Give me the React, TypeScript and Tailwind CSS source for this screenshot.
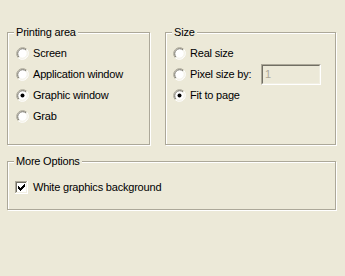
import React from "react";

function Radio({ checked }: { checked?: boolean }) {
  return (
    <svg width="13" height="13" viewBox="0 0 13 13" className="shrink-0">
      <circle cx="6.5" cy="6.5" r="5.5" fill="#ffffff" />
      <path d="M2.26 10.74 A6 6 0 0 1 10.74 2.26" fill="none" stroke="#aca899" strokeWidth="1" />
      <path d="M10.74 2.26 A6 6 0 0 1 2.26 10.74" fill="none" stroke="#ffffff" strokeWidth="1" />
      <path d="M2.97 10.03 A5 5 0 0 1 10.03 2.97" fill="none" stroke="#716f64" strokeWidth="1" />
      <path d="M10.03 2.97 A5 5 0 0 1 2.97 10.03" fill="none" stroke="#f1efe2" strokeWidth="1" />
      {checked && <circle cx="6.5" cy="6.5" r="2" fill="#000000" />}
    </svg>
  );
}

function Checkbox({ checked }: { checked?: boolean }) {
  const cols = [3, 4, 5, 6, 7, 8, 9];
  const tops = [5, 6, 7, 6, 5, 4, 3];
  return (
    <svg width="13" height="13" viewBox="0 0 13 13" className="shrink-0" shapeRendering="crispEdges">
      <rect x="0" y="0" width="13" height="13" fill="#ffffff" />
      <rect x="0" y="0" width="12" height="1" fill="#aca899" />
      <rect x="0" y="0" width="1" height="12" fill="#aca899" />
      <rect x="1" y="1" width="10" height="1" fill="#716f64" />
      <rect x="1" y="1" width="1" height="10" fill="#716f64" />
      <rect x="1" y="11" width="11" height="1" fill="#f1efe2" />
      <rect x="11" y="1" width="1" height="11" fill="#f1efe2" />
      {checked &&
        cols.map((c, i) => (
          <rect key={c} x={c} y={tops[i]} width="1" height="3" fill="#000000" />
        ))}
    </svg>
  );
}

function Group({
  title,
  className,
  children,
}: {
  title: string;
  className: string;
  children: React.ReactNode;
}) {
  return (
    <div
      className={
        "relative border border-[#aca899] shadow-[inset_1px_1px_0_#ffffff,1px_1px_0_#ffffff] " +
        className
      }
    >
      <div className="absolute left-[6px] top-[-7px] bg-[#ece9d8] px-[2px] leading-[13px]">
        {title}
      </div>
      {children}
    </div>
  );
}

function RadioRow({ label, checked }: { label: string; checked?: boolean }) {
  return (
    <div className="flex h-[21px] items-center gap-[4px]">
      <Radio checked={checked} />
      <span className="leading-[13px]">{label}</span>
    </div>
  );
}

export default function App() {
  return (
    <div
      className="w-[345px] h-[276px] bg-[#ece9d8] pt-[32px] pl-[7px] text-[11px] tracking-[-0.2px] text-black"
      style={{ fontFamily: '"Liberation Sans", Arial, sans-serif' }}
    >
      <div className="flex gap-[15px]">
        <Group title="Printing area" className="w-[143px] h-[113px] pt-[10px] pl-[8px]">
          <RadioRow label="Screen" />
          <RadioRow label="Application window" />
          <RadioRow label="Graphic window" checked />
          <RadioRow label="Grab" />
        </Group>
        <Group title="Size" className="w-[171px] h-[113px] pt-[10px] pl-[7px]">
          <RadioRow label="Real size" />
          <div className="flex h-[21px] items-center">
            <div className="flex flex-1 items-center gap-[4px]">
              <Radio />
              <span className="leading-[13px]">Pixel size by:</span>
            </div>
            <div className="mr-[14px] h-[21px] w-[60px] border-t border-l border-[#aca899] border-r border-b border-r-white border-b-white">
              <div className="h-full w-full border-t border-l border-[#716f64] border-r border-b border-r-[#f1efe2] border-b-[#f1efe2] pl-[2px] pt-[2px] leading-[13px] text-[#aca899]">
                1
              </div>
            </div>
          </div>
          <RadioRow label="Fit to page" checked />
        </Group>
      </div>
      <Group title="More Options" className="mt-[16px] w-[329px] h-[49px] pt-[15px] pl-[7px]">
        <div className="flex h-[21px] items-center gap-[5px]">
          <Checkbox checked />
          <span className="leading-[13px]">White graphics background</span>
        </div>
      </Group>
    </div>
  );
}
